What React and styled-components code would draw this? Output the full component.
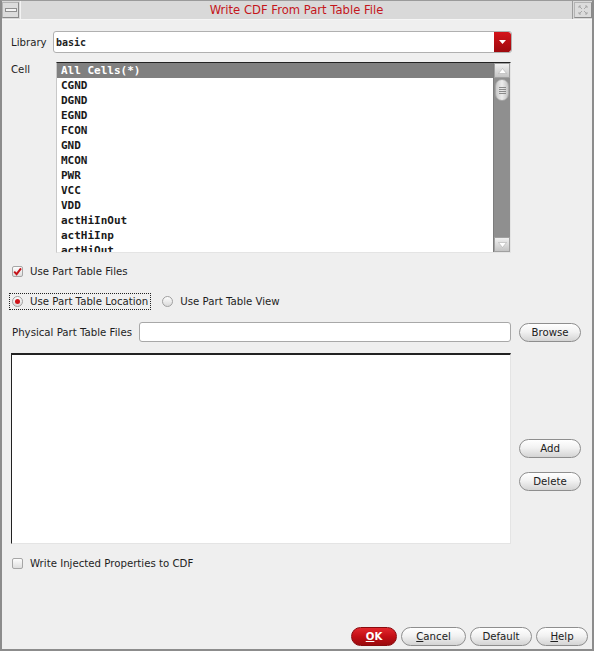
import React from "react";
import styled, { createGlobalStyle, css } from "styled-components";

const GlobalStyle = createGlobalStyle`
  html, body {
    margin: 0;
    padding: 0;
    background: #efefef;
  }
  body {
    font-family: "DejaVu Sans", Verdana, sans-serif;
    font-size: 10.2px;
    color: #1e1e1e;
  }
`;

const cells = [
  "All Cells(*)",
  "CGND",
  "DGND",
  "EGND",
  "FCON",
  "GND",
  "MCON",
  "PWR",
  "VCC",
  "VDD",
  "actHiInOut",
  "actHiInp",
  "actHiOut",
];

const Window = styled.div`
  box-sizing: border-box;
  width: 594px;
  height: 651px;
  border: 2px solid #8c8c8c;
  border-top: 1px solid #9a9a9a;
  background: #efefef;
  display: flex;
  flex-direction: column;
  overflow: hidden;
`;

const TitleBar = styled.div`
  height: 18px;
  display: flex;
  align-items: stretch;
  background: #d9d9d9;
  border-bottom: 1px solid #f6f6f6;
`;

const FrameButton = styled.div`
  width: 15px;
  margin: 1px 1px 1px 0;
  border: 1px solid #b4b4b4;
  border-right-color: #8a8a8a;
  border-bottom-color: #8a8a8a;
  background: #dcdcdc;
  display: flex;
  align-items: center;
  justify-content: center;
  flex: none;
  ${(p) => p.$right && css`
    width: 16px;
    margin: 1px 0 1px 1px;
  `}
`;

const MinBar = styled.div`
  width: 10px;
  height: 2px;
  border: 1px solid #8f8f8f;
  background: #f4f4f4;
`;

const Title = styled.div`
  flex: 1;
  text-align: center;
  font-size: 11.6px;
  line-height: 18px;
  color: #c4161c;
  border-left: 1px solid #f2f2f2;
  border-right: 1px solid #9c9c9c;
`;

const Body = styled.div`
  flex: 1;
  display: flex;
  flex-direction: column;
  padding: 11px 12px 1px 9px;
`;

const Row = styled.div`
  display: flex;
  align-items: ${(p) => p.$align || "center"};
  margin-top: ${(p) => p.$top || 0}px;
  margin-right: ${(p) => p.$right || 0}px;
  margin-left: ${(p) => p.$left || 0}px;
`;

const Label = styled.span`
  width: ${(p) => p.$width || "auto"};
  flex: none;
  white-space: nowrap;
  padding-top: ${(p) => p.$pt || 0}px;
  padding-left: ${(p) => p.$pl || 0}px;
`;

const Combo = styled.div`
  flex: 1;
  height: 20px;
  display: flex;
  align-items: center;
  background: #fff;
  border: 1px solid #b0b0b0;
  border-radius: 3px;
  overflow: hidden;
`;

const ComboText = styled.span`
  flex: 1;
  padding-left: 2px;
  font-family: "DejaVu Sans Mono", monospace;
  font-weight: bold;
  font-size: 10px;
`;

const DropButton = styled.div`
  width: 17px;
  height: 20px;
  background: linear-gradient(#d4141a, #9e0a0e);
  border-radius: 0 3px 3px 0;
  display: flex;
  align-items: center;
  justify-content: center;
`;

const ListBox = styled.div`
  flex: 1;
  height: ${(p) => p.$height}px;
  box-sizing: border-box;
  display: flex;
  background: #fff;
  border-top: ${(p) => (p.$dark ? 2 : 1)}px solid #222;
  border-left: 1px solid ${(p) => (p.$dark ? "#222" : "#c8c8c8")};
  border-right: 1px solid #e4e4e4;
  border-bottom: 1px solid #e4e4e4;
  overflow: hidden;
`;

const Items = styled.div`
  flex: 1;
  overflow: hidden;
`;

const Item = styled.div`
  height: 15px;
  line-height: 15px;
  padding-left: 4px;
  font-family: "DejaVu Sans Mono", monospace;
  font-weight: bold;
  font-size: 11px;
  color: ${(p) => (p.$selected ? "#fff" : "#1a1a1a")};
  background: ${(p) => (p.$selected ? "#808080" : "transparent")};
  white-space: nowrap;
`;

const Scrollbar = styled.div`
  width: 16px;
  background: #8f8f8f;
  display: flex;
  flex-direction: column;
  border-left: 1px solid #7c7c7c;
`;

const ScrollArrow = styled.div`
  height: 15px;
  background: linear-gradient(#f0f0f0, #c4c4c4);
  border: 1px solid #a0a0a0;
  box-sizing: border-box;
  display: flex;
  align-items: center;
  justify-content: center;
`;

const Thumb = styled.div`
  height: 20px;
  margin: 1px 1px 0;
  border-radius: 7px;
  background: linear-gradient(90deg, #c8c8c8, #ececec 50%, #c4c4c4);
  border: 1px solid #a8a8a8;
  display: flex;
  flex-direction: column;
  align-items: center;
  justify-content: center;
  gap: 1px;
`;

const ThumbLine = styled.div`
  width: 7px;
  height: 1px;
  background: #8a8a8a;
`;

const Track = styled.div`
  flex: 1;
`;

const Toggle = styled.div`
  display: flex;
  align-items: center;
  gap: 7px;
  padding: 2px;
  margin-left: ${(p) => p.$ml || 0}px;
  border: 1px dotted ${(p) => (p.$focus ? "#222" : "transparent")};
`;

const Box = styled.div`
  width: 11px;
  height: 11px;
  box-sizing: border-box;
  border: 1px solid #a6a6a6;
  border-radius: 2px;
  background: linear-gradient(#fdfdfd, #dedede);
  display: flex;
  align-items: center;
  justify-content: center;
`;

const Radio = styled.div`
  width: 11px;
  height: 11px;
  box-sizing: border-box;
  border: 1px solid #a0a0a0;
  border-radius: 50%;
  background: linear-gradient(#fdfdfd, #dadada);
  display: flex;
  align-items: center;
  justify-content: center;
`;

const Dot = styled.div`
  width: 5px;
  height: 5px;
  border-radius: 50%;
  background: #d0141a;
`;

const TextInput = styled.div`
  flex: 1;
  height: 20px;
  box-sizing: border-box;
  background: #fff;
  border: 1px solid #a8a8a8;
  border-radius: 3px;
`;

const Button = styled.div`
  width: ${(p) => p.$width || 62}px;
  height: 19px;
  box-sizing: border-box;
  flex: none;
  display: flex;
  align-items: center;
  justify-content: center;
  border-radius: 10px;
  border: 1px solid #8e8e8e;
  background: linear-gradient(#ffffff, #f2f2f2 45%, #d4d4d4);
  color: #202020;
  ${(p) => p.$primary && css`
    border-color: #8a0a0e;
    background: linear-gradient(#e2272d, #c30f15 50%, #9a0a0e);
    color: #fff;
    font-weight: bold;
  `}
`;

const Underline = styled.span`
  text-decoration: underline;
`;

const Side = styled.div`
  width: 61px;
  margin-left: 8px;
  display: flex;
  flex-direction: column;
  gap: 14px;
  padding-top: ${(p) => p.$pt || 0}px;
`;

const Footer = styled.div`
  margin-top: auto;
  display: flex;
  justify-content: flex-end;
  gap: 4px;
  margin-right: -8px;
  margin-bottom: 2px;
`;

const ArrowTri = ({ dir = "up", color = "#fff" }) => (
  <svg width="9" height="6" viewBox="0 0 9 6">
    {dir === "up" ? (
      <path d="M4.5 0.5 L8.5 5.5 L0.5 5.5 Z" fill={color} stroke="#b0b0b0" strokeWidth="0.6" />
    ) : (
      <path d="M0.5 0.5 L8.5 0.5 L4.5 5.5 Z" fill={color} stroke="#b0b0b0" strokeWidth="0.6" />
    )}
  </svg>
);

const Check = () => (
  <svg width="9" height="9" viewBox="0 0 9 9">
    <path d="M1.2 4.6 L3.6 7.2 L8 1.4" fill="none" stroke="#c4141a" strokeWidth="2" />
  </svg>
);

const CloseGlyph = () => (
  <svg width="10" height="10" viewBox="0 0 10 10">
    <path d="M1 1 L4 4 M9 1 L6 4 M1 9 L4 6 M9 9 L6 6 M1 1 L3 1 M1 1 L1 3 M9 1 L7 1 M9 1 L9 3 M1 9 L3 9 M1 9 L1 7 M9 9 L7 9 M9 9 L9 7" stroke="#a8a8a8" strokeWidth="1" fill="none" />
  </svg>
);

const App = () => {
  return (
    <>
      <GlobalStyle />
      <Window>
        <TitleBar>
          <FrameButton>
            <MinBar />
          </FrameButton>
          <Title>Write CDF From Part Table File</Title>
          <FrameButton $right>
            <CloseGlyph />
          </FrameButton>
        </TitleBar>
        <Body>
          <Row $right={68}>
            <Label $width="42px">Library</Label>
            <Combo>
              <ComboText>basic</ComboText>
              <DropButton>
                <svg width="7" height="4" viewBox="0 0 7 4">
                  <path d="M0 0 L7 0 L3.5 4 Z" fill="#fff" />
                </svg>
              </DropButton>
            </Combo>
          </Row>

          <Row $align="flex-start" $top={9} $right={69}>
            <Label $width="45px" $pt={2}>Cell</Label>
            <ListBox $height={191}>
              <Items>
                {cells.map((c, i) => (
                  <Item key={c} $selected={i === 0}>
                    {c}
                  </Item>
                ))}
              </Items>
              <Scrollbar>
                <ScrollArrow>
                  <ArrowTri dir="up" />
                </ScrollArrow>
                <Thumb>
                  <ThumbLine />
                  <ThumbLine />
                  <ThumbLine />
                  <ThumbLine />
                </Thumb>
                <Track />
                <ScrollArrow>
                  <ArrowTri dir="down" />
                </ScrollArrow>
              </Scrollbar>
            </ListBox>
          </Row>

          <Row $top={10} $left={-2}>
            <Toggle>
              <Box>
                <Check />
              </Box>
              <span>Use Part Table Files</span>
            </Toggle>
          </Row>

          <Row $top={13} $left={-2}>
            <Toggle $focus>
              <Radio>
                <Dot />
              </Radio>
              <span>Use Part Table Location</span>
            </Toggle>
            <Toggle $ml={8}>
              <Radio />
              <span>Use Part Table View</span>
            </Toggle>
          </Row>

          <Row $top={12}>
            <Label $width="127px" $pl={1}>Physical Part Table Files</Label>
            <TextInput />
            <Side>
              <Button>Browse</Button>
            </Side>
          </Row>

          <Row $align="flex-start" $top={11}>
            <ListBox $height={191} $dark />
            <Side $pt={86}>
              <Button>Add</Button>
              <Button>Delete</Button>
            </Side>
          </Row>

          <Row $top={11} $left={-2}>
            <Toggle>
              <Box />
              <span>Write Injected Properties to CDF</span>
            </Toggle>
          </Row>

          <Footer>
            <Button $primary $width={46}>
              <Underline>O</Underline>K
            </Button>
            <Button $width={65}>
              <Underline>C</Underline>ancel
            </Button>
            <Button $width={62}>Default</Button>
            <Button $width={52}>
              <Underline>H</Underline>elp
            </Button>
          </Footer>
        </Body>
      </Window>
    </>
  );
};

export default App;
